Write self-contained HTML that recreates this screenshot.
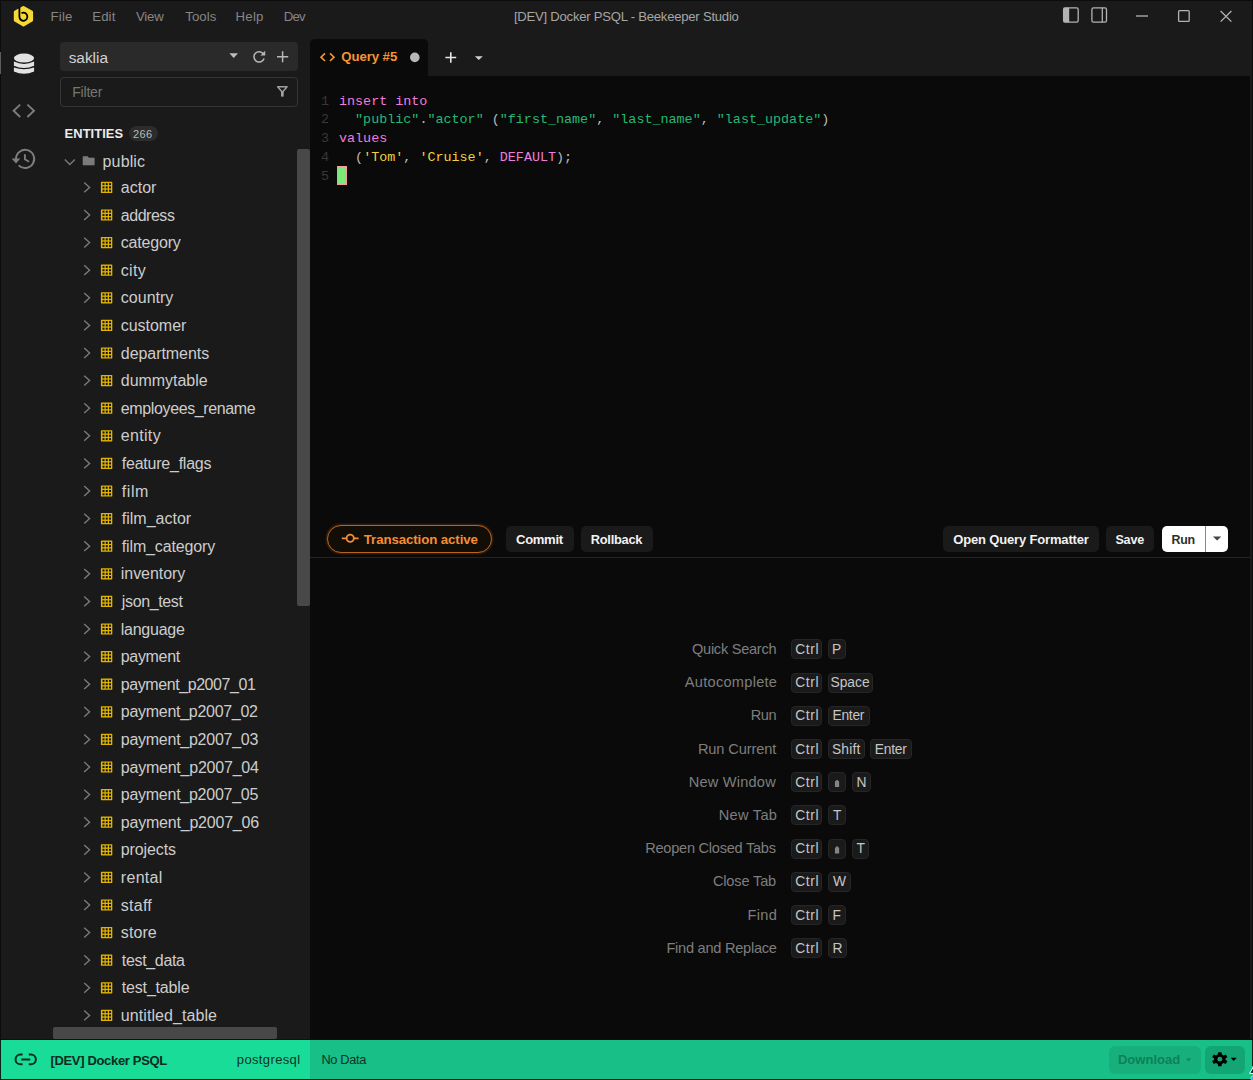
<!DOCTYPE html>
<html><head><meta charset="utf-8">
<style>
*{box-sizing:border-box;margin:0;padding:0}
html,body{width:1253px;height:1080px;overflow:hidden;background:#1a1a1a;font-family:"Liberation Sans",sans-serif}
.a{position:absolute;white-space:nowrap;line-height:1}
svg{position:absolute;overflow:visible}
.mono{font-family:"Liberation Mono",monospace}
</style></head><body>
<div class="a" style="left:0px;top:0px;width:1253px;height:1px;background:#0c0c0c;"></div>
<div class="a" style="left:0px;top:0px;width:1px;height:1080px;background:#0c0c0c;"></div>
<div class="a" style="left:1252px;top:0px;width:1px;height:1080px;background:#0c0c0c;"></div>
<svg style="left:0;top:0" width="50" height="34" viewBox="0 0 50 34">
  <path d="M23.45 7.6 L31.5 12.2 L31.5 20.2 L23.45 24.8 L15.4 20.2 L15.4 12.2 Z" fill="#f6d935" stroke="#f6d935" stroke-width="3.2" stroke-linejoin="round"/>
  <path d="M19.4 7.3 L19.4 16.6 A4 4.1 0 1 0 21.5 13.1" fill="none" stroke="#000" stroke-width="1.8"/>
</svg>
<div class="a" style="left:50.60px;top:10px;color:#868686;font-size:13.2px;letter-spacing:0.177px;">File</div>
<div class="a" style="left:92.20px;top:10px;color:#868686;font-size:13.2px;letter-spacing:0.149px;">Edit</div>
<div class="a" style="left:136.00px;top:10px;color:#868686;font-size:13.2px;letter-spacing:-0.203px;">View</div>
<div class="a" style="left:185.30px;top:10px;color:#868686;font-size:13.2px;letter-spacing:0.053px;">Tools</div>
<div class="a" style="left:235.60px;top:10px;color:#868686;font-size:13.2px;letter-spacing:0.217px;">Help</div>
<div class="a" style="left:283.70px;top:10px;color:#868686;font-size:13.2px;letter-spacing:-0.759px;">Dev</div>
<div class="a" style="left:513.90px;top:10px;color:#a6a6a6;font-size:13.1px;letter-spacing:-0.233px;">[DEV] Docker PSQL - Beekeeper Studio</div>
<svg style="left:1060px;top:4px" width="190" height="24" viewBox="1060 4 190 24">
  <rect x="1063.6" y="7.8" width="14.6" height="14.4" rx="1.6" fill="none" stroke="#b3b3b3" stroke-width="1.3"/>
  <rect x="1063.6" y="7.8" width="5.6" height="14.4" fill="#b3b3b3"/>
  <rect x="1091.9" y="7.8" width="14.6" height="14.4" rx="1.6" fill="none" stroke="#b3b3b3" stroke-width="1.3"/>
  <line x1="1102.3" y1="8" x2="1102.3" y2="22" stroke="#b3b3b3" stroke-width="1.3"/>
  <line x1="1136" y1="16" x2="1148" y2="16" stroke="#b3b3b3" stroke-width="1.3"/>
  <rect x="1178.6" y="10.6" width="10.6" height="10.8" rx="1" fill="none" stroke="#b3b3b3" stroke-width="1.3"/>
  <path d="M1220.6 11 L1231.4 21.6 M1231.4 11 L1220.6 21.6" stroke="#b3b3b3" stroke-width="1.3"/>
</svg>
<div class="a" style="left:0px;top:52px;width:1px;height:22px;background:#5c5c5c;"></div>
<svg style="left:0;top:40px" width="48" height="140" viewBox="0 40 48 140">
  <g fill="#e2e2e2">
    <ellipse cx="24" cy="58.05" rx="10.1" ry="4.45"/>
    <path d="M13.9 61.6 Q24 66.4 34.1 61.6 L34.1 65.8 Q24 70.4 13.9 65.8 Z"/>
    <path d="M13.9 67.6 Q24 71 34.1 67.6 L34.1 71.4 Q24 76.2 13.9 71.4 Z"/>
  </g>
  <path d="M20.2 104.6 L13.6 110.8 L20.2 117 M27.4 104.6 L34 110.8 L27.4 117" fill="none" stroke="#7d7d7d" stroke-width="1.9"/>
  <g fill="none" stroke="#7d7d7d" stroke-width="1.9">
    <path d="M16 158.9 A9.1 9.1 0 1 1 18.6 165.3"/>
    <path d="M24.9 154.2 L24.9 159.2 L29 161.8"/>
  </g>
  <path d="M11.6 158.4 L20.4 158.4 L16 163.4 Z" fill="#7d7d7d"/>
</svg>
<div class="a" style="left:60px;top:42px;width:238px;height:29px;background:#2a2a2a;border-radius:4px;"></div>
<div class="a" style="left:68.70px;top:50px;color:#d2d2d2;font-size:15.4px;letter-spacing:-0.009px;">saklia</div>
<svg style="left:220px;top:44px" width="80" height="26" viewBox="220 44 80 26">
  <path d="M229.4 53.2 L238 53.2 L233.7 58 Z" fill="#bdbdbd"/>
  <path d="M263.4 53.8 A5.2 5.2 0 1 0 264.1 58.6" fill="none" stroke="#b8b8b8" stroke-width="1.5"/>
  <path d="M265.2 50.8 L265.2 55.6 L260.4 55.6 Z" fill="#b8b8b8"/>
  <path d="M282.6 51.2 L282.6 62.2 M277 56.7 L288.2 56.7" stroke="#b8b8b8" stroke-width="1.5"/>
</svg>
<div class="a" style="left:60px;top:77px;width:238px;height:30px;border:1px solid #353535;border-radius:4px;"></div>
<div class="a" style="left:72.20px;top:85px;color:#767676;font-size:14px;letter-spacing:-0.182px;">Filter</div>
<svg style="left:270px;top:80px" width="26" height="22" viewBox="270 80 26 22">
  <path d="M277.6 86.7 L287.1 86.7 L282.35 92.2 Z" fill="none" stroke="#a0a0a0" stroke-width="1.4" stroke-linejoin="round"/><rect x="281" y="91" width="2.7" height="5.6" fill="#a0a0a0"/>
</svg>
<div class="a" style="left:64.60px;top:128px;color:#ececec;font-size:12.9px;font-weight:bold;letter-spacing:0.066px;">ENTITIES</div>
<div class="a" style="left:128.8px;top:125.8px;width:29px;height:15px;background:#2c2c2c;border-radius:8px;"></div>
<div class="a" style="left:133.00px;top:129px;color:#b9b9b9;font-size:11px;letter-spacing:0.325px;">266</div>
<svg style="left:60px;top:150px" width="60" height="20" viewBox="60 150 60 20">
  <path d="M64.8 159.4 L69.8 164.4 L74.8 159.4" fill="none" stroke="#777" stroke-width="1.4"/>
  <path d="M83 156.6 L87.6 156.6 L88.8 158 L94.3 158 L94.3 165 L83 165 Z" fill="#7b7b7b" stroke="#7b7b7b" stroke-width="0.6" stroke-linejoin="round"/>
</svg>
<div class="a" style="left:102.60px;top:154px;color:#cdcdcd;font-size:16px;letter-spacing:0.131px;">public</div>
<div class="a" style="left:120.80px;top:180px;color:#cdcdcd;font-size:16px;letter-spacing:0.019px;">actor</div>
<div class="a" style="left:120.80px;top:208px;color:#cdcdcd;font-size:16px;letter-spacing:-0.470px;">address</div>
<div class="a" style="left:120.80px;top:235px;color:#cdcdcd;font-size:16px;letter-spacing:-0.190px;">category</div>
<div class="a" style="left:120.80px;top:263px;color:#cdcdcd;font-size:16px;letter-spacing:0.280px;">city</div>
<div class="a" style="left:120.80px;top:290px;color:#cdcdcd;font-size:16px;letter-spacing:0.012px;">country</div>
<div class="a" style="left:120.80px;top:318px;color:#cdcdcd;font-size:16px;letter-spacing:-0.036px;">customer</div>
<div class="a" style="left:120.80px;top:346px;color:#cdcdcd;font-size:16px;letter-spacing:-0.054px;">departments</div>
<div class="a" style="left:120.80px;top:373px;color:#cdcdcd;font-size:16px;letter-spacing:-0.039px;">dummytable</div>
<div class="a" style="left:120.80px;top:401px;color:#cdcdcd;font-size:16px;letter-spacing:-0.375px;">employees_rename</div>
<div class="a" style="left:120.80px;top:428px;color:#cdcdcd;font-size:16px;letter-spacing:0.320px;">entity</div>
<div class="a" style="left:121.80px;top:456px;color:#cdcdcd;font-size:16px;letter-spacing:-0.232px;">feature_flags</div>
<div class="a" style="left:121.80px;top:484px;color:#cdcdcd;font-size:16px;letter-spacing:0.562px;">film</div>
<div class="a" style="left:121.80px;top:511px;color:#cdcdcd;font-size:16px;letter-spacing:0.002px;">film_actor</div>
<div class="a" style="left:121.80px;top:539px;color:#cdcdcd;font-size:16px;letter-spacing:-0.141px;">film_category</div>
<div class="a" style="left:120.80px;top:566px;color:#cdcdcd;font-size:16px;letter-spacing:-0.048px;">inventory</div>
<div class="a" style="left:121.80px;top:594px;color:#cdcdcd;font-size:16px;letter-spacing:-0.362px;">json_test</div>
<div class="a" style="left:120.80px;top:622px;color:#cdcdcd;font-size:16px;letter-spacing:-0.264px;">language</div>
<div class="a" style="left:120.80px;top:649px;color:#cdcdcd;font-size:16px;letter-spacing:-0.327px;">payment</div>
<div class="a" style="left:120.80px;top:677px;color:#cdcdcd;font-size:16px;letter-spacing:-0.424px;">payment_p2007_01</div>
<div class="a" style="left:120.80px;top:704px;color:#cdcdcd;font-size:16px;letter-spacing:-0.284px;">payment_p2007_02</div>
<div class="a" style="left:120.80px;top:732px;color:#cdcdcd;font-size:16px;letter-spacing:-0.262px;">payment_p2007_03</div>
<div class="a" style="left:120.80px;top:760px;color:#cdcdcd;font-size:16px;letter-spacing:-0.225px;">payment_p2007_04</div>
<div class="a" style="left:120.80px;top:787px;color:#cdcdcd;font-size:16px;letter-spacing:-0.262px;">payment_p2007_05</div>
<div class="a" style="left:120.80px;top:815px;color:#cdcdcd;font-size:16px;letter-spacing:-0.209px;">payment_p2007_06</div>
<div class="a" style="left:120.80px;top:842px;color:#cdcdcd;font-size:16px;letter-spacing:-0.115px;">projects</div>
<div class="a" style="left:120.80px;top:870px;color:#cdcdcd;font-size:16px;letter-spacing:0.302px;">rental</div>
<div class="a" style="left:120.80px;top:898px;color:#cdcdcd;font-size:16px;letter-spacing:0.255px;">staff</div>
<div class="a" style="left:120.80px;top:925px;color:#cdcdcd;font-size:16px;letter-spacing:0.097px;">store</div>
<div class="a" style="left:121.80px;top:953px;color:#cdcdcd;font-size:16px;letter-spacing:-0.331px;">test_data</div>
<div class="a" style="left:121.80px;top:980px;color:#cdcdcd;font-size:16px;letter-spacing:-0.176px;">test_table</div>
<div class="a" style="left:120.80px;top:1008px;color:#cdcdcd;font-size:16px;letter-spacing:0.072px;">untitled_table</div>
<svg style="left:0;top:0" width="320" height="1040" viewBox="0 0 320 1040"><path d="M84.2 182.50 L89.6 187.40 L84.2 192.30" fill="none" stroke="#7c7c7c" stroke-width="1.35"/><rect x="100.9" y="181.80" width="11.4" height="11.2" rx="0.6" fill="#e0b400"/><g fill="#141414"><rect x="102.50" y="183.10" width="2" height="2"/><rect x="102.50" y="186.40" width="2" height="2"/><rect x="102.50" y="189.70" width="2" height="2"/><rect x="105.75" y="183.10" width="2" height="2"/><rect x="105.75" y="186.40" width="2" height="2"/><rect x="105.75" y="189.70" width="2" height="2"/><rect x="109.00" y="183.10" width="2" height="2"/><rect x="109.00" y="186.40" width="2" height="2"/><rect x="109.00" y="189.70" width="2" height="2"/></g><path d="M84.2 210.10 L89.6 215.00 L84.2 219.90" fill="none" stroke="#7c7c7c" stroke-width="1.35"/><rect x="100.9" y="209.40" width="11.4" height="11.2" rx="0.6" fill="#e0b400"/><g fill="#141414"><rect x="102.50" y="210.70" width="2" height="2"/><rect x="102.50" y="214.00" width="2" height="2"/><rect x="102.50" y="217.30" width="2" height="2"/><rect x="105.75" y="210.70" width="2" height="2"/><rect x="105.75" y="214.00" width="2" height="2"/><rect x="105.75" y="217.30" width="2" height="2"/><rect x="109.00" y="210.70" width="2" height="2"/><rect x="109.00" y="214.00" width="2" height="2"/><rect x="109.00" y="217.30" width="2" height="2"/></g><path d="M84.2 237.70 L89.6 242.60 L84.2 247.50" fill="none" stroke="#7c7c7c" stroke-width="1.35"/><rect x="100.9" y="237.00" width="11.4" height="11.2" rx="0.6" fill="#e0b400"/><g fill="#141414"><rect x="102.50" y="238.30" width="2" height="2"/><rect x="102.50" y="241.60" width="2" height="2"/><rect x="102.50" y="244.90" width="2" height="2"/><rect x="105.75" y="238.30" width="2" height="2"/><rect x="105.75" y="241.60" width="2" height="2"/><rect x="105.75" y="244.90" width="2" height="2"/><rect x="109.00" y="238.30" width="2" height="2"/><rect x="109.00" y="241.60" width="2" height="2"/><rect x="109.00" y="244.90" width="2" height="2"/></g><path d="M84.2 265.30 L89.6 270.20 L84.2 275.10" fill="none" stroke="#7c7c7c" stroke-width="1.35"/><rect x="100.9" y="264.60" width="11.4" height="11.2" rx="0.6" fill="#e0b400"/><g fill="#141414"><rect x="102.50" y="265.90" width="2" height="2"/><rect x="102.50" y="269.20" width="2" height="2"/><rect x="102.50" y="272.50" width="2" height="2"/><rect x="105.75" y="265.90" width="2" height="2"/><rect x="105.75" y="269.20" width="2" height="2"/><rect x="105.75" y="272.50" width="2" height="2"/><rect x="109.00" y="265.90" width="2" height="2"/><rect x="109.00" y="269.20" width="2" height="2"/><rect x="109.00" y="272.50" width="2" height="2"/></g><path d="M84.2 292.90 L89.6 297.80 L84.2 302.70" fill="none" stroke="#7c7c7c" stroke-width="1.35"/><rect x="100.9" y="292.20" width="11.4" height="11.2" rx="0.6" fill="#e0b400"/><g fill="#141414"><rect x="102.50" y="293.50" width="2" height="2"/><rect x="102.50" y="296.80" width="2" height="2"/><rect x="102.50" y="300.10" width="2" height="2"/><rect x="105.75" y="293.50" width="2" height="2"/><rect x="105.75" y="296.80" width="2" height="2"/><rect x="105.75" y="300.10" width="2" height="2"/><rect x="109.00" y="293.50" width="2" height="2"/><rect x="109.00" y="296.80" width="2" height="2"/><rect x="109.00" y="300.10" width="2" height="2"/></g><path d="M84.2 320.50 L89.6 325.40 L84.2 330.30" fill="none" stroke="#7c7c7c" stroke-width="1.35"/><rect x="100.9" y="319.80" width="11.4" height="11.2" rx="0.6" fill="#e0b400"/><g fill="#141414"><rect x="102.50" y="321.10" width="2" height="2"/><rect x="102.50" y="324.40" width="2" height="2"/><rect x="102.50" y="327.70" width="2" height="2"/><rect x="105.75" y="321.10" width="2" height="2"/><rect x="105.75" y="324.40" width="2" height="2"/><rect x="105.75" y="327.70" width="2" height="2"/><rect x="109.00" y="321.10" width="2" height="2"/><rect x="109.00" y="324.40" width="2" height="2"/><rect x="109.00" y="327.70" width="2" height="2"/></g><path d="M84.2 348.10 L89.6 353.00 L84.2 357.90" fill="none" stroke="#7c7c7c" stroke-width="1.35"/><rect x="100.9" y="347.40" width="11.4" height="11.2" rx="0.6" fill="#e0b400"/><g fill="#141414"><rect x="102.50" y="348.70" width="2" height="2"/><rect x="102.50" y="352.00" width="2" height="2"/><rect x="102.50" y="355.30" width="2" height="2"/><rect x="105.75" y="348.70" width="2" height="2"/><rect x="105.75" y="352.00" width="2" height="2"/><rect x="105.75" y="355.30" width="2" height="2"/><rect x="109.00" y="348.70" width="2" height="2"/><rect x="109.00" y="352.00" width="2" height="2"/><rect x="109.00" y="355.30" width="2" height="2"/></g><path d="M84.2 375.70 L89.6 380.60 L84.2 385.50" fill="none" stroke="#7c7c7c" stroke-width="1.35"/><rect x="100.9" y="375.00" width="11.4" height="11.2" rx="0.6" fill="#e0b400"/><g fill="#141414"><rect x="102.50" y="376.30" width="2" height="2"/><rect x="102.50" y="379.60" width="2" height="2"/><rect x="102.50" y="382.90" width="2" height="2"/><rect x="105.75" y="376.30" width="2" height="2"/><rect x="105.75" y="379.60" width="2" height="2"/><rect x="105.75" y="382.90" width="2" height="2"/><rect x="109.00" y="376.30" width="2" height="2"/><rect x="109.00" y="379.60" width="2" height="2"/><rect x="109.00" y="382.90" width="2" height="2"/></g><path d="M84.2 403.30 L89.6 408.20 L84.2 413.10" fill="none" stroke="#7c7c7c" stroke-width="1.35"/><rect x="100.9" y="402.60" width="11.4" height="11.2" rx="0.6" fill="#e0b400"/><g fill="#141414"><rect x="102.50" y="403.90" width="2" height="2"/><rect x="102.50" y="407.20" width="2" height="2"/><rect x="102.50" y="410.50" width="2" height="2"/><rect x="105.75" y="403.90" width="2" height="2"/><rect x="105.75" y="407.20" width="2" height="2"/><rect x="105.75" y="410.50" width="2" height="2"/><rect x="109.00" y="403.90" width="2" height="2"/><rect x="109.00" y="407.20" width="2" height="2"/><rect x="109.00" y="410.50" width="2" height="2"/></g><path d="M84.2 430.90 L89.6 435.80 L84.2 440.70" fill="none" stroke="#7c7c7c" stroke-width="1.35"/><rect x="100.9" y="430.20" width="11.4" height="11.2" rx="0.6" fill="#e0b400"/><g fill="#141414"><rect x="102.50" y="431.50" width="2" height="2"/><rect x="102.50" y="434.80" width="2" height="2"/><rect x="102.50" y="438.10" width="2" height="2"/><rect x="105.75" y="431.50" width="2" height="2"/><rect x="105.75" y="434.80" width="2" height="2"/><rect x="105.75" y="438.10" width="2" height="2"/><rect x="109.00" y="431.50" width="2" height="2"/><rect x="109.00" y="434.80" width="2" height="2"/><rect x="109.00" y="438.10" width="2" height="2"/></g><path d="M84.2 458.50 L89.6 463.40 L84.2 468.30" fill="none" stroke="#7c7c7c" stroke-width="1.35"/><rect x="100.9" y="457.80" width="11.4" height="11.2" rx="0.6" fill="#e0b400"/><g fill="#141414"><rect x="102.50" y="459.10" width="2" height="2"/><rect x="102.50" y="462.40" width="2" height="2"/><rect x="102.50" y="465.70" width="2" height="2"/><rect x="105.75" y="459.10" width="2" height="2"/><rect x="105.75" y="462.40" width="2" height="2"/><rect x="105.75" y="465.70" width="2" height="2"/><rect x="109.00" y="459.10" width="2" height="2"/><rect x="109.00" y="462.40" width="2" height="2"/><rect x="109.00" y="465.70" width="2" height="2"/></g><path d="M84.2 486.10 L89.6 491.00 L84.2 495.90" fill="none" stroke="#7c7c7c" stroke-width="1.35"/><rect x="100.9" y="485.40" width="11.4" height="11.2" rx="0.6" fill="#e0b400"/><g fill="#141414"><rect x="102.50" y="486.70" width="2" height="2"/><rect x="102.50" y="490.00" width="2" height="2"/><rect x="102.50" y="493.30" width="2" height="2"/><rect x="105.75" y="486.70" width="2" height="2"/><rect x="105.75" y="490.00" width="2" height="2"/><rect x="105.75" y="493.30" width="2" height="2"/><rect x="109.00" y="486.70" width="2" height="2"/><rect x="109.00" y="490.00" width="2" height="2"/><rect x="109.00" y="493.30" width="2" height="2"/></g><path d="M84.2 513.70 L89.6 518.60 L84.2 523.50" fill="none" stroke="#7c7c7c" stroke-width="1.35"/><rect x="100.9" y="513.00" width="11.4" height="11.2" rx="0.6" fill="#e0b400"/><g fill="#141414"><rect x="102.50" y="514.30" width="2" height="2"/><rect x="102.50" y="517.60" width="2" height="2"/><rect x="102.50" y="520.90" width="2" height="2"/><rect x="105.75" y="514.30" width="2" height="2"/><rect x="105.75" y="517.60" width="2" height="2"/><rect x="105.75" y="520.90" width="2" height="2"/><rect x="109.00" y="514.30" width="2" height="2"/><rect x="109.00" y="517.60" width="2" height="2"/><rect x="109.00" y="520.90" width="2" height="2"/></g><path d="M84.2 541.30 L89.6 546.20 L84.2 551.10" fill="none" stroke="#7c7c7c" stroke-width="1.35"/><rect x="100.9" y="540.60" width="11.4" height="11.2" rx="0.6" fill="#e0b400"/><g fill="#141414"><rect x="102.50" y="541.90" width="2" height="2"/><rect x="102.50" y="545.20" width="2" height="2"/><rect x="102.50" y="548.50" width="2" height="2"/><rect x="105.75" y="541.90" width="2" height="2"/><rect x="105.75" y="545.20" width="2" height="2"/><rect x="105.75" y="548.50" width="2" height="2"/><rect x="109.00" y="541.90" width="2" height="2"/><rect x="109.00" y="545.20" width="2" height="2"/><rect x="109.00" y="548.50" width="2" height="2"/></g><path d="M84.2 568.90 L89.6 573.80 L84.2 578.70" fill="none" stroke="#7c7c7c" stroke-width="1.35"/><rect x="100.9" y="568.20" width="11.4" height="11.2" rx="0.6" fill="#e0b400"/><g fill="#141414"><rect x="102.50" y="569.50" width="2" height="2"/><rect x="102.50" y="572.80" width="2" height="2"/><rect x="102.50" y="576.10" width="2" height="2"/><rect x="105.75" y="569.50" width="2" height="2"/><rect x="105.75" y="572.80" width="2" height="2"/><rect x="105.75" y="576.10" width="2" height="2"/><rect x="109.00" y="569.50" width="2" height="2"/><rect x="109.00" y="572.80" width="2" height="2"/><rect x="109.00" y="576.10" width="2" height="2"/></g><path d="M84.2 596.50 L89.6 601.40 L84.2 606.30" fill="none" stroke="#7c7c7c" stroke-width="1.35"/><rect x="100.9" y="595.80" width="11.4" height="11.2" rx="0.6" fill="#e0b400"/><g fill="#141414"><rect x="102.50" y="597.10" width="2" height="2"/><rect x="102.50" y="600.40" width="2" height="2"/><rect x="102.50" y="603.70" width="2" height="2"/><rect x="105.75" y="597.10" width="2" height="2"/><rect x="105.75" y="600.40" width="2" height="2"/><rect x="105.75" y="603.70" width="2" height="2"/><rect x="109.00" y="597.10" width="2" height="2"/><rect x="109.00" y="600.40" width="2" height="2"/><rect x="109.00" y="603.70" width="2" height="2"/></g><path d="M84.2 624.10 L89.6 629.00 L84.2 633.90" fill="none" stroke="#7c7c7c" stroke-width="1.35"/><rect x="100.9" y="623.40" width="11.4" height="11.2" rx="0.6" fill="#e0b400"/><g fill="#141414"><rect x="102.50" y="624.70" width="2" height="2"/><rect x="102.50" y="628.00" width="2" height="2"/><rect x="102.50" y="631.30" width="2" height="2"/><rect x="105.75" y="624.70" width="2" height="2"/><rect x="105.75" y="628.00" width="2" height="2"/><rect x="105.75" y="631.30" width="2" height="2"/><rect x="109.00" y="624.70" width="2" height="2"/><rect x="109.00" y="628.00" width="2" height="2"/><rect x="109.00" y="631.30" width="2" height="2"/></g><path d="M84.2 651.70 L89.6 656.60 L84.2 661.50" fill="none" stroke="#7c7c7c" stroke-width="1.35"/><rect x="100.9" y="651.00" width="11.4" height="11.2" rx="0.6" fill="#e0b400"/><g fill="#141414"><rect x="102.50" y="652.30" width="2" height="2"/><rect x="102.50" y="655.60" width="2" height="2"/><rect x="102.50" y="658.90" width="2" height="2"/><rect x="105.75" y="652.30" width="2" height="2"/><rect x="105.75" y="655.60" width="2" height="2"/><rect x="105.75" y="658.90" width="2" height="2"/><rect x="109.00" y="652.30" width="2" height="2"/><rect x="109.00" y="655.60" width="2" height="2"/><rect x="109.00" y="658.90" width="2" height="2"/></g><path d="M84.2 679.30 L89.6 684.20 L84.2 689.10" fill="none" stroke="#7c7c7c" stroke-width="1.35"/><rect x="100.9" y="678.60" width="11.4" height="11.2" rx="0.6" fill="#e0b400"/><g fill="#141414"><rect x="102.50" y="679.90" width="2" height="2"/><rect x="102.50" y="683.20" width="2" height="2"/><rect x="102.50" y="686.50" width="2" height="2"/><rect x="105.75" y="679.90" width="2" height="2"/><rect x="105.75" y="683.20" width="2" height="2"/><rect x="105.75" y="686.50" width="2" height="2"/><rect x="109.00" y="679.90" width="2" height="2"/><rect x="109.00" y="683.20" width="2" height="2"/><rect x="109.00" y="686.50" width="2" height="2"/></g><path d="M84.2 706.90 L89.6 711.80 L84.2 716.70" fill="none" stroke="#7c7c7c" stroke-width="1.35"/><rect x="100.9" y="706.20" width="11.4" height="11.2" rx="0.6" fill="#e0b400"/><g fill="#141414"><rect x="102.50" y="707.50" width="2" height="2"/><rect x="102.50" y="710.80" width="2" height="2"/><rect x="102.50" y="714.10" width="2" height="2"/><rect x="105.75" y="707.50" width="2" height="2"/><rect x="105.75" y="710.80" width="2" height="2"/><rect x="105.75" y="714.10" width="2" height="2"/><rect x="109.00" y="707.50" width="2" height="2"/><rect x="109.00" y="710.80" width="2" height="2"/><rect x="109.00" y="714.10" width="2" height="2"/></g><path d="M84.2 734.50 L89.6 739.40 L84.2 744.30" fill="none" stroke="#7c7c7c" stroke-width="1.35"/><rect x="100.9" y="733.80" width="11.4" height="11.2" rx="0.6" fill="#e0b400"/><g fill="#141414"><rect x="102.50" y="735.10" width="2" height="2"/><rect x="102.50" y="738.40" width="2" height="2"/><rect x="102.50" y="741.70" width="2" height="2"/><rect x="105.75" y="735.10" width="2" height="2"/><rect x="105.75" y="738.40" width="2" height="2"/><rect x="105.75" y="741.70" width="2" height="2"/><rect x="109.00" y="735.10" width="2" height="2"/><rect x="109.00" y="738.40" width="2" height="2"/><rect x="109.00" y="741.70" width="2" height="2"/></g><path d="M84.2 762.10 L89.6 767.00 L84.2 771.90" fill="none" stroke="#7c7c7c" stroke-width="1.35"/><rect x="100.9" y="761.40" width="11.4" height="11.2" rx="0.6" fill="#e0b400"/><g fill="#141414"><rect x="102.50" y="762.70" width="2" height="2"/><rect x="102.50" y="766.00" width="2" height="2"/><rect x="102.50" y="769.30" width="2" height="2"/><rect x="105.75" y="762.70" width="2" height="2"/><rect x="105.75" y="766.00" width="2" height="2"/><rect x="105.75" y="769.30" width="2" height="2"/><rect x="109.00" y="762.70" width="2" height="2"/><rect x="109.00" y="766.00" width="2" height="2"/><rect x="109.00" y="769.30" width="2" height="2"/></g><path d="M84.2 789.70 L89.6 794.60 L84.2 799.50" fill="none" stroke="#7c7c7c" stroke-width="1.35"/><rect x="100.9" y="789.00" width="11.4" height="11.2" rx="0.6" fill="#e0b400"/><g fill="#141414"><rect x="102.50" y="790.30" width="2" height="2"/><rect x="102.50" y="793.60" width="2" height="2"/><rect x="102.50" y="796.90" width="2" height="2"/><rect x="105.75" y="790.30" width="2" height="2"/><rect x="105.75" y="793.60" width="2" height="2"/><rect x="105.75" y="796.90" width="2" height="2"/><rect x="109.00" y="790.30" width="2" height="2"/><rect x="109.00" y="793.60" width="2" height="2"/><rect x="109.00" y="796.90" width="2" height="2"/></g><path d="M84.2 817.30 L89.6 822.20 L84.2 827.10" fill="none" stroke="#7c7c7c" stroke-width="1.35"/><rect x="100.9" y="816.60" width="11.4" height="11.2" rx="0.6" fill="#e0b400"/><g fill="#141414"><rect x="102.50" y="817.90" width="2" height="2"/><rect x="102.50" y="821.20" width="2" height="2"/><rect x="102.50" y="824.50" width="2" height="2"/><rect x="105.75" y="817.90" width="2" height="2"/><rect x="105.75" y="821.20" width="2" height="2"/><rect x="105.75" y="824.50" width="2" height="2"/><rect x="109.00" y="817.90" width="2" height="2"/><rect x="109.00" y="821.20" width="2" height="2"/><rect x="109.00" y="824.50" width="2" height="2"/></g><path d="M84.2 844.90 L89.6 849.80 L84.2 854.70" fill="none" stroke="#7c7c7c" stroke-width="1.35"/><rect x="100.9" y="844.20" width="11.4" height="11.2" rx="0.6" fill="#e0b400"/><g fill="#141414"><rect x="102.50" y="845.50" width="2" height="2"/><rect x="102.50" y="848.80" width="2" height="2"/><rect x="102.50" y="852.10" width="2" height="2"/><rect x="105.75" y="845.50" width="2" height="2"/><rect x="105.75" y="848.80" width="2" height="2"/><rect x="105.75" y="852.10" width="2" height="2"/><rect x="109.00" y="845.50" width="2" height="2"/><rect x="109.00" y="848.80" width="2" height="2"/><rect x="109.00" y="852.10" width="2" height="2"/></g><path d="M84.2 872.50 L89.6 877.40 L84.2 882.30" fill="none" stroke="#7c7c7c" stroke-width="1.35"/><rect x="100.9" y="871.80" width="11.4" height="11.2" rx="0.6" fill="#e0b400"/><g fill="#141414"><rect x="102.50" y="873.10" width="2" height="2"/><rect x="102.50" y="876.40" width="2" height="2"/><rect x="102.50" y="879.70" width="2" height="2"/><rect x="105.75" y="873.10" width="2" height="2"/><rect x="105.75" y="876.40" width="2" height="2"/><rect x="105.75" y="879.70" width="2" height="2"/><rect x="109.00" y="873.10" width="2" height="2"/><rect x="109.00" y="876.40" width="2" height="2"/><rect x="109.00" y="879.70" width="2" height="2"/></g><path d="M84.2 900.10 L89.6 905.00 L84.2 909.90" fill="none" stroke="#7c7c7c" stroke-width="1.35"/><rect x="100.9" y="899.40" width="11.4" height="11.2" rx="0.6" fill="#e0b400"/><g fill="#141414"><rect x="102.50" y="900.70" width="2" height="2"/><rect x="102.50" y="904.00" width="2" height="2"/><rect x="102.50" y="907.30" width="2" height="2"/><rect x="105.75" y="900.70" width="2" height="2"/><rect x="105.75" y="904.00" width="2" height="2"/><rect x="105.75" y="907.30" width="2" height="2"/><rect x="109.00" y="900.70" width="2" height="2"/><rect x="109.00" y="904.00" width="2" height="2"/><rect x="109.00" y="907.30" width="2" height="2"/></g><path d="M84.2 927.70 L89.6 932.60 L84.2 937.50" fill="none" stroke="#7c7c7c" stroke-width="1.35"/><rect x="100.9" y="927.00" width="11.4" height="11.2" rx="0.6" fill="#e0b400"/><g fill="#141414"><rect x="102.50" y="928.30" width="2" height="2"/><rect x="102.50" y="931.60" width="2" height="2"/><rect x="102.50" y="934.90" width="2" height="2"/><rect x="105.75" y="928.30" width="2" height="2"/><rect x="105.75" y="931.60" width="2" height="2"/><rect x="105.75" y="934.90" width="2" height="2"/><rect x="109.00" y="928.30" width="2" height="2"/><rect x="109.00" y="931.60" width="2" height="2"/><rect x="109.00" y="934.90" width="2" height="2"/></g><path d="M84.2 955.30 L89.6 960.20 L84.2 965.10" fill="none" stroke="#7c7c7c" stroke-width="1.35"/><rect x="100.9" y="954.60" width="11.4" height="11.2" rx="0.6" fill="#e0b400"/><g fill="#141414"><rect x="102.50" y="955.90" width="2" height="2"/><rect x="102.50" y="959.20" width="2" height="2"/><rect x="102.50" y="962.50" width="2" height="2"/><rect x="105.75" y="955.90" width="2" height="2"/><rect x="105.75" y="959.20" width="2" height="2"/><rect x="105.75" y="962.50" width="2" height="2"/><rect x="109.00" y="955.90" width="2" height="2"/><rect x="109.00" y="959.20" width="2" height="2"/><rect x="109.00" y="962.50" width="2" height="2"/></g><path d="M84.2 982.90 L89.6 987.80 L84.2 992.70" fill="none" stroke="#7c7c7c" stroke-width="1.35"/><rect x="100.9" y="982.20" width="11.4" height="11.2" rx="0.6" fill="#e0b400"/><g fill="#141414"><rect x="102.50" y="983.50" width="2" height="2"/><rect x="102.50" y="986.80" width="2" height="2"/><rect x="102.50" y="990.10" width="2" height="2"/><rect x="105.75" y="983.50" width="2" height="2"/><rect x="105.75" y="986.80" width="2" height="2"/><rect x="105.75" y="990.10" width="2" height="2"/><rect x="109.00" y="983.50" width="2" height="2"/><rect x="109.00" y="986.80" width="2" height="2"/><rect x="109.00" y="990.10" width="2" height="2"/></g><path d="M84.2 1010.50 L89.6 1015.40 L84.2 1020.30" fill="none" stroke="#7c7c7c" stroke-width="1.35"/><rect x="100.9" y="1009.80" width="11.4" height="11.2" rx="0.6" fill="#e0b400"/><g fill="#141414"><rect x="102.50" y="1011.10" width="2" height="2"/><rect x="102.50" y="1014.40" width="2" height="2"/><rect x="102.50" y="1017.70" width="2" height="2"/><rect x="105.75" y="1011.10" width="2" height="2"/><rect x="105.75" y="1014.40" width="2" height="2"/><rect x="105.75" y="1017.70" width="2" height="2"/><rect x="109.00" y="1011.10" width="2" height="2"/><rect x="109.00" y="1014.40" width="2" height="2"/><rect x="109.00" y="1017.70" width="2" height="2"/></g></svg>
<div class="a" style="left:297px;top:149px;width:13px;height:457px;background:#484848;border-radius:2px;"></div>
<div class="a" style="left:53px;top:1027px;width:224px;height:12px;background:#484848;border-radius:2px;"></div>
<div class="a" style="left:310px;top:39px;width:118px;height:38px;background:#0a0a0a;border-radius:5px 5px 0 0;"></div>
<svg style="left:315px;top:45px" width="180" height="24" viewBox="315 45 180 24">
  <path d="M325 53.4 L321 57.2 L325 61 M330 53.4 L334 57.2 L330 61" fill="none" stroke="#f59533" stroke-width="1.6"/>
  <circle cx="414.8" cy="57.4" r="4.8" fill="#b7b7b7"/>
  <path d="M450.8 52.2 L450.8 62.8 M445.4 57.5 L456.2 57.5" stroke="#e6e6e6" stroke-width="1.6"/>
  <path d="M474.8 56.2 L482.8 56.2 L478.8 60 Z" fill="#d0d0d0"/>
</svg>
<div class="a" style="left:341.30px;top:50px;color:#f59533;font-size:13.2px;font-weight:bold;letter-spacing:-0.075px;">Query #5</div>
<div class="a" style="left:310px;top:76px;width:940px;height:964px;background:#0a0a0a;"></div>
<div class="a mono" style="left:310px;top:90.5px;font-size:13.4px;line-height:19px"><div style="position:relative;height:19px;width:900px;top:1px"><span style="position:absolute;left:11px;color:#383838">1</span><span style="position:absolute;left:29px;white-space:pre"><span style="color:#f07ddd">insert into</span></span></div><div style="position:relative;height:19px;width:900px;top:0px"><span style="position:absolute;left:11px;color:#383838">2</span><span style="position:absolute;left:29px;white-space:pre">  <span style="color:#25b877">&quot;public&quot;</span><span style="color:#bdbdbd">.</span><span style="color:#25b877">&quot;actor&quot;</span> <span style="color:#bdbdbd">(</span><span style="color:#25b877">&quot;first_name&quot;</span><span style="color:#bdbdbd">,</span> <span style="color:#25b877">&quot;last_name&quot;</span><span style="color:#bdbdbd">,</span> <span style="color:#25b877">&quot;last_update&quot;</span><span style="color:#bdbdbd">)</span></span></div><div style="position:relative;height:19px;width:900px;top:0px"><span style="position:absolute;left:11px;color:#383838">3</span><span style="position:absolute;left:29px;white-space:pre"><span style="color:#f07ddd">values</span></span></div><div style="position:relative;height:19px;width:900px;top:0px"><span style="position:absolute;left:11px;color:#383838">4</span><span style="position:absolute;left:29px;white-space:pre">  <span style="color:#bdbdbd">(</span><span style="color:#f2d13d">&#x27;Tom&#x27;</span><span style="color:#bdbdbd">,</span> <span style="color:#f2d13d">&#x27;Cruise&#x27;</span><span style="color:#bdbdbd">,</span> <span style="color:#f07ddd">DEFAULT</span><span style="color:#bdbdbd">);</span></span></div><div style="position:relative;height:19px;width:900px;top:0px"><span style="position:absolute;left:11px;color:#383838">5</span><span style="position:absolute;left:29px;white-space:pre"></span></div></div>
<div class="a" style="left:337px;top:166px;width:10px;height:19px;background:#79ea79;border:1px solid #f59c9c;"></div>
<div class="a" style="left:326.5px;top:525px;width:165px;height:28px;background:#130d08;border-radius:14px;border:1px solid #b8621c;box-shadow:0 0 3px rgba(230,120,30,.5);"></div>
<svg style="left:336px;top:530px" width="30" height="18" viewBox="336 530 30 18">
  <circle cx="350.2" cy="538.3" r="3.6" fill="none" stroke="#f58d33" stroke-width="1.8"/>
  <path d="M341.8 538.3 L346.6 538.3 M353.8 538.3 L358.6 538.3" stroke="#f58d33" stroke-width="1.8"/>
</svg>
<div class="a" style="left:363.80px;top:533px;color:#f58d33;font-size:13.3px;font-weight:bold;letter-spacing:-0.112px;">Transaction active</div>
<div class="a" style="left:506px;top:526px;width:68px;height:26px;background:#1a1a1a;border-radius:5px;"></div>
<div class="a" style="left:516.00px;top:533px;color:#f2f2f2;font-size:13.1px;font-weight:bold;letter-spacing:-0.326px;">Commit</div>
<div class="a" style="left:581px;top:526px;width:72px;height:26px;background:#1a1a1a;border-radius:5px;"></div>
<div class="a" style="left:590.70px;top:534px;color:#f2f2f2;font-size:12.8px;font-weight:bold;letter-spacing:-0.224px;">Rollback</div>
<div class="a" style="left:943px;top:526.4px;width:156px;height:25.6px;background:#1a1a1a;border-radius:5px;"></div>
<div class="a" style="left:953.30px;top:533px;color:#f2f2f2;font-size:13px;font-weight:bold;letter-spacing:-0.163px;">Open Query Formatter</div>
<div class="a" style="left:1106.3px;top:526.4px;width:47.5px;height:25.6px;background:#1a1a1a;border-radius:5px;"></div>
<div class="a" style="left:1115.40px;top:534px;color:#f2f2f2;font-size:12.6px;font-weight:bold;letter-spacing:-0.206px;">Save</div>
<div class="a" style="left:1162.2px;top:526.4px;width:66px;height:25.6px;background:#ffffff;border-radius:5px;"></div>
<div class="a" style="left:1205.4px;top:526.4px;width:1px;height:25.6px;background:#8a8a8a;"></div>
<div class="a" style="left:1171.60px;top:534px;color:#2e2e2e;font-size:12.4px;font-weight:bold;letter-spacing:-0.272px;">Run</div>
<svg style="left:1208px;top:532px" width="20" height="12" viewBox="1208 532 20 12">
  <path d="M1212.9 536.5 L1221.3 536.5 L1217.1 540.6 Z" fill="#444"/>
</svg>
<div class="a" style="left:310px;top:557px;width:940px;height:1px;background:#242424;"></div>
<div class="a" style="left:692.00px;top:642px;color:#7e7e7e;font-size:14.6px;letter-spacing:-0.281px;">Quick Search</div>
<div class="a" style="left:791.2px;top:639.3px;width:31.2px;height:20.2px;background:#1a1a1a;border:1px solid #262626;border-radius:4px;"></div>
<div class="a" style="left:795.15px;top:643px;color:#c6c6c6;font-size:13.8px;letter-spacing:0.662px;">Ctrl</div>
<div class="a" style="left:828.1px;top:639.3px;width:17.9px;height:20.2px;background:#1a1a1a;border:1px solid #262626;border-radius:4px;"></div>
<div class="a" style="left:832.05px;top:643px;color:#c6c6c6;font-size:13.8px;">P</div>
<div class="a" style="left:684.80px;top:675px;color:#7e7e7e;font-size:14.6px;letter-spacing:0.266px;">Autocomplete</div>
<div class="a" style="left:791.2px;top:672.5px;width:31.2px;height:20.2px;background:#1a1a1a;border:1px solid #262626;border-radius:4px;"></div>
<div class="a" style="left:795.15px;top:676px;color:#c6c6c6;font-size:13.8px;letter-spacing:0.662px;">Ctrl</div>
<div class="a" style="left:828.1px;top:672.5px;width:44.7px;height:20.2px;background:#1a1a1a;border:1px solid #262626;border-radius:4px;"></div>
<div class="a" style="left:830.45px;top:676px;color:#c6c6c6;font-size:13.8px;">Space</div>
<div class="a" style="left:750.70px;top:708px;color:#7e7e7e;font-size:14.6px;letter-spacing:-0.411px;">Run</div>
<div class="a" style="left:791.2px;top:705.7px;width:31.2px;height:20.2px;background:#1a1a1a;border:1px solid #262626;border-radius:4px;"></div>
<div class="a" style="left:795.15px;top:709px;color:#c6c6c6;font-size:13.8px;letter-spacing:0.662px;">Ctrl</div>
<div class="a" style="left:828.1px;top:705.7px;width:41.6px;height:20.2px;background:#1a1a1a;border:1px solid #262626;border-radius:4px;"></div>
<div class="a" style="left:832.45px;top:709px;color:#c6c6c6;font-size:13.8px;letter-spacing:-0.250px;">Enter</div>
<div class="a" style="left:697.90px;top:742px;color:#7e7e7e;font-size:14.6px;letter-spacing:-0.101px;">Run Current</div>
<div class="a" style="left:791.2px;top:738.9px;width:31.2px;height:20.2px;background:#1a1a1a;border:1px solid #262626;border-radius:4px;"></div>
<div class="a" style="left:795.15px;top:743px;color:#c6c6c6;font-size:13.8px;letter-spacing:0.662px;">Ctrl</div>
<div class="a" style="left:828.1px;top:738.9px;width:36.5px;height:20.2px;background:#1a1a1a;border:1px solid #262626;border-radius:4px;"></div>
<div class="a" style="left:831.90px;top:743px;color:#c6c6c6;font-size:13.8px;letter-spacing:0.187px;">Shift</div>
<div class="a" style="left:870.3px;top:738.9px;width:41.9px;height:20.2px;background:#1a1a1a;border:1px solid #262626;border-radius:4px;"></div>
<div class="a" style="left:874.80px;top:743px;color:#c6c6c6;font-size:13.8px;letter-spacing:-0.250px;">Enter</div>
<div class="a" style="left:688.70px;top:775px;color:#7e7e7e;font-size:14.6px;letter-spacing:0.204px;">New Window</div>
<div class="a" style="left:791.2px;top:772.1px;width:31.2px;height:20.2px;background:#1a1a1a;border:1px solid #262626;border-radius:4px;"></div>
<div class="a" style="left:795.15px;top:776px;color:#c6c6c6;font-size:13.8px;letter-spacing:0.662px;">Ctrl</div>
<div class="a" style="left:828.1px;top:772.1px;width:17.9px;height:20.2px;background:#1a1a1a;border:1px solid #262626;border-radius:4px;"></div>
<div class="a" style="left:851.7px;top:772.1px;width:19.7px;height:20.2px;background:#1a1a1a;border:1px solid #262626;border-radius:4px;"></div>
<div class="a" style="left:856.55px;top:776px;color:#c6c6c6;font-size:13.8px;">N</div>
<div class="a" style="left:718.80px;top:808px;color:#7e7e7e;font-size:14.6px;letter-spacing:0.261px;">New Tab</div>
<div class="a" style="left:791.2px;top:805.3px;width:31.2px;height:20.2px;background:#1a1a1a;border:1px solid #262626;border-radius:4px;"></div>
<div class="a" style="left:795.15px;top:809px;color:#c6c6c6;font-size:13.8px;letter-spacing:0.662px;">Ctrl</div>
<div class="a" style="left:828.1px;top:805.3px;width:17.9px;height:20.2px;background:#1a1a1a;border:1px solid #262626;border-radius:4px;"></div>
<div class="a" style="left:833.05px;top:809px;color:#c6c6c6;font-size:13.8px;">T</div>
<div class="a" style="left:645.20px;top:841px;color:#7e7e7e;font-size:14.6px;letter-spacing:-0.263px;">Reopen Closed Tabs</div>
<div class="a" style="left:791.2px;top:838.5px;width:31.2px;height:20.2px;background:#1a1a1a;border:1px solid #262626;border-radius:4px;"></div>
<div class="a" style="left:795.15px;top:842px;color:#c6c6c6;font-size:13.8px;letter-spacing:0.662px;">Ctrl</div>
<div class="a" style="left:828.1px;top:838.5px;width:17.9px;height:20.2px;background:#1a1a1a;border:1px solid #262626;border-radius:4px;"></div>
<div class="a" style="left:851.7px;top:838.5px;width:17.4px;height:20.2px;background:#1a1a1a;border:1px solid #262626;border-radius:4px;"></div>
<div class="a" style="left:856.40px;top:842px;color:#c6c6c6;font-size:13.8px;">T</div>
<div class="a" style="left:712.90px;top:874px;color:#7e7e7e;font-size:14.6px;letter-spacing:-0.162px;">Close Tab</div>
<div class="a" style="left:791.2px;top:871.7px;width:31.2px;height:20.2px;background:#1a1a1a;border:1px solid #262626;border-radius:4px;"></div>
<div class="a" style="left:795.15px;top:875px;color:#c6c6c6;font-size:13.8px;letter-spacing:0.662px;">Ctrl</div>
<div class="a" style="left:828.1px;top:871.7px;width:23px;height:20.2px;background:#1a1a1a;border:1px solid #262626;border-radius:4px;"></div>
<div class="a" style="left:833.10px;top:875px;color:#c6c6c6;font-size:13.8px;">W</div>
<div class="a" style="left:747.60px;top:908px;color:#7e7e7e;font-size:14.6px;letter-spacing:0.286px;">Find</div>
<div class="a" style="left:791.2px;top:904.9px;width:31.2px;height:20.2px;background:#1a1a1a;border:1px solid #262626;border-radius:4px;"></div>
<div class="a" style="left:795.15px;top:909px;color:#c6c6c6;font-size:13.8px;letter-spacing:0.662px;">Ctrl</div>
<div class="a" style="left:828.1px;top:904.9px;width:17.9px;height:20.2px;background:#1a1a1a;border:1px solid #262626;border-radius:4px;"></div>
<div class="a" style="left:832.55px;top:909px;color:#c6c6c6;font-size:13.8px;">F</div>
<div class="a" style="left:666.40px;top:941px;color:#7e7e7e;font-size:14.6px;letter-spacing:-0.258px;">Find and Replace</div>
<div class="a" style="left:791.2px;top:938.1px;width:31.2px;height:20.2px;background:#1a1a1a;border:1px solid #262626;border-radius:4px;"></div>
<div class="a" style="left:795.15px;top:942px;color:#c6c6c6;font-size:13.8px;letter-spacing:0.662px;">Ctrl</div>
<div class="a" style="left:828.1px;top:938.1px;width:18.7px;height:20.2px;background:#1a1a1a;border:1px solid #262626;border-radius:4px;"></div>
<div class="a" style="left:832.45px;top:942px;color:#c6c6c6;font-size:13.8px;">R</div>
<svg style="left:0;top:0" width="1253" height="1080" viewBox="0 0 1253 1080"><path d="M834.95 781.50 L837.05 779.70 L839.15 781.50 L839.15 787.10 L834.95 787.10 Z" fill="#858585"/><path d="M834.95 847.90 L837.05 846.10 L839.15 847.90 L839.15 853.50 L834.95 853.50 Z" fill="#858585"/></svg>
<div class="a" style="left:0px;top:1039px;width:1253px;height:1px;background:#0f0a0a;"></div>
<div class="a" style="left:0px;top:1040px;width:310px;height:39px;background:#18dc97;"></div>
<div class="a" style="left:310px;top:1040px;width:943px;height:39px;background:#18bf87;"></div>
<div class="a" style="left:0px;top:1079px;width:1253px;height:1px;background:#08241a;"></div>
<div class="a" style="left:0px;top:1040px;width:1px;height:40px;background:#08241a;"></div>
<svg style="left:10px;top:1048px" width="32" height="24" viewBox="10 1048 32 24">
  <path d="M22.6 1054.6 L20.4 1054.6 A4.85 4.85 0 0 0 20.4 1064.3 L22.6 1064.3 M28.8 1054.6 L31 1054.6 A4.85 4.85 0 0 1 31 1064.3 L28.8 1064.3 M21.2 1059.45 L30.2 1059.45" fill="none" stroke="#0b2d22" stroke-width="2"/>
</svg>
<div class="a" style="left:50.40px;top:1054px;color:#0c2b21;font-size:13px;font-weight:bold;letter-spacing:-0.327px;">[DEV] Docker PSQL</div>
<div class="a" style="left:236.80px;top:1053px;color:#0e3327;font-size:13px;letter-spacing:0.368px;">postgresql</div>
<div class="a" style="left:321.40px;top:1054px;color:#0e3327;font-size:12.8px;letter-spacing:-0.314px;">No Data</div>
<div class="a" style="left:1109.2px;top:1046.1px;width:91.5px;height:27.5px;background:#17b07d;border-radius:6px;"></div>
<div class="a" style="left:1117.90px;top:1053px;color:#0e8058;font-size:13.1px;font-weight:bold;letter-spacing:-0.038px;">Download</div>
<div class="a" style="left:1205px;top:1046.1px;width:39.7px;height:27.5px;background:#14a574;border-radius:6px;"></div>
<svg style="left:1180px;top:1046px" width="70" height="28" viewBox="1180 1046 70 28">
  <path d="M1186 1058.6 L1191.2 1058.6 L1188.6 1061.2 Z" fill="#0e8058"/>
  <g transform="translate(1219.8 1059.2)">
    <path d="M-1.6 -7 L1.6 -7 L2.1 -4.7 L3.8 -3.8 L6 -4.8 L7.6 -2.1 L5.7 -0.6 L5.7 0.6 L7.6 2.1 L6 4.8 L3.8 3.8 L2.1 4.7 L1.6 7 L-1.6 7 L-2.1 4.7 L-3.8 3.8 L-6 4.8 L-7.6 2.1 L-5.7 0.6 L-5.7 -0.6 L-7.6 -2.1 L-6 -4.8 L-3.8 -3.8 L-2.1 -4.7 Z" fill="#000"/>
    <circle r="2.4" fill="#14a574"/>
  </g>
  <path d="M1230.6 1057.8 L1236.8 1057.8 L1233.7 1061 Z" fill="#000"/>
</svg>
<div class="a" style="left:1252px;top:1040px;width:1px;height:26px;background:#06261b;"></div>
<svg style="left:1240px;top:1060px" width="13" height="20" viewBox="1240 1060 13 20">
  <path d="M1253.5 1066.6 L1249.6 1073.4 L1253.5 1073.4 Z" fill="#1a1a2a" stroke="#fff" stroke-width="1"/>
  <circle cx="1253.5" cy="1078.6" r="2.6" fill="#39a7f5" stroke="#d0f0ff" stroke-width="0.6"/>
</svg>
</body></html>
